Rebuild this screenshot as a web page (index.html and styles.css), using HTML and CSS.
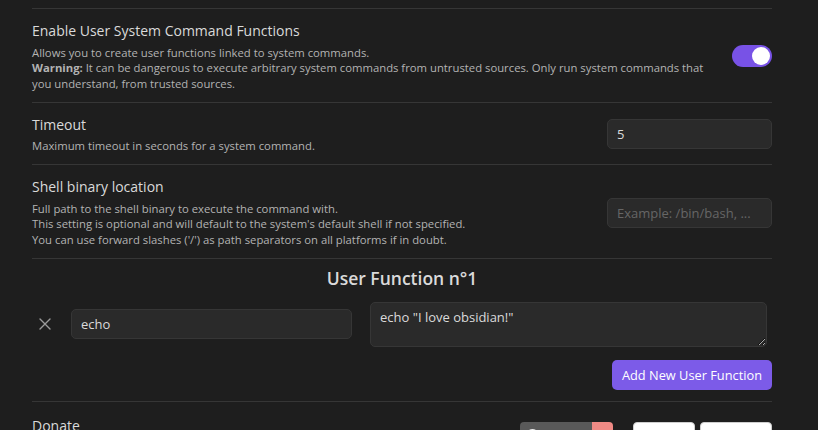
FILE: index.html
```html
<!DOCTYPE html>
<html lang="en">
<head>
<meta charset="utf-8">
<title>Settings</title>
<link rel="stylesheet" href="styles.css">
</head>
<body>
<div class="settings">
  <div class="setting-item">
    <div class="info">
      <div class="name">Enable User System Command Functions</div>
      <div class="desc">Allows you to create user functions linked to system commands.<br><strong>Warning:</strong> It can be dangerous to execute arbitrary system commands from untrusted sources. Only run system commands that you understand, from trusted sources.</div>
    </div>
    <div class="control">
      <div class="toggle is-on"><span class="knob"></span></div>
    </div>
  </div>

  <div class="setting-item">
    <div class="info">
      <div class="name">Timeout</div>
      <div class="desc">Maximum timeout in seconds for a system command.</div>
    </div>
    <div class="control">
      <input class="text-input" type="text" value="5">
    </div>
  </div>

  <div class="setting-item">
    <div class="info">
      <div class="name">Shell binary location</div>
      <div class="desc">Full path to the shell binary to execute the command with.<br>This setting is optional and will default to the system's default shell if not specified.<br>You can use forward slashes ('/') as path separators on all platforms if in doubt.</div>
    </div>
    <div class="control">
      <input class="text-input" type="text" placeholder="Example: /bin/bash, ...">
    </div>
  </div>

  <div class="user-functions">
    <h3 class="uf-title">User Function n°1</h3>
    <div class="uf-row">
      <button class="remove-btn" aria-label="Remove">
        <svg viewBox="0 0 12 12" width="12" height="12"><path d="M1 1 L11 11 M11 1 L1 11" stroke="#9a9a9a" stroke-width="1.4" stroke-linecap="round" fill="none"/></svg>
      </button>
      <input class="text-input name-input" type="text" value="echo">
      <textarea class="cmd-input">echo "I love obsidian!"</textarea>
    </div>
    <div class="uf-actions">
      <button class="mod-cta">Add New User Function</button>
    </div>
  </div>

  <div class="setting-item donate">
    <div class="info">
      <div class="name">Donate</div>
    </div>
    <div class="control badges">
      <span class="badge sponsor"><span class="b-left"><span class="gh-dot"></span>Sponsor</span><span class="b-right">♥</span></span>
      <span class="badge paypal"><span class="pp-icon"></span>Donate</span>
      <span class="badge coffee">Buy me a coffee</span>
    </div>
  </div>
</div>
</body>
</html>
```

FILE: styles.css
```css
* { box-sizing: border-box; }

html, body {
  margin: 0;
  padding: 0;
  background: #1e1e1e;
  overflow: hidden;
}

body {
  font-family: "Open Sans", "Noto Sans", sans-serif;
  color: #dadada;
  height: 430px;
}

.settings {
  width: 740px;
  margin-left: 32px;
  padding-top: 8px;
}

.setting-item {
  display: flex;
  align-items: center;
  border-top: 1px solid #363636;
  padding: 12px 0 10.5px;
}

.info {
  flex: 1 1 auto;
  margin-right: 16px;
}

.name {
  font-size: 14px;
  line-height: 19.5px;
  color: #dadada;
}

.desc {
  font-size: 11.3px;
  line-height: 15.6px;
  color: #b3b3b3;
  padding-top: 4px;
}

.desc strong {
  font-weight: 700;
  color: #b3b3b3;
}

.control {
  flex: 0 0 auto;
  display: flex;
  align-items: center;
}

.toggle {
  width: 40px;
  height: 22px;
  border-radius: 11px;
  background: #7852e6;
  position: relative;
}

.toggle .knob {
  position: absolute;
  top: 2px;
  right: 2px;
  width: 18px;
  height: 18px;
  border-radius: 50%;
  background: #ffffff;
}

.text-input {
  width: 165px;
  height: 30px;
  background: #2a2a2a;
  border: 1px solid #363636;
  border-radius: 5px;
  padding: 0 9px;
  font-family: "Open Sans", "Noto Sans", sans-serif;
  font-size: 13px;
  color: #dadada;
  outline: none;
}

.text-input::placeholder {
  color: #666666;
}

.user-functions {
  border-top: 1px solid #363636;
  padding: 6.5px 0 11px;
}

.uf-title {
  margin: 0;
  text-align: center;
  font-size: 17.5px;
  line-height: 24px;
  font-weight: 600;
  color: #dadada;
}

.uf-row {
  display: flex;
  align-items: center;
  margin-top: 12px;
}

.remove-btn {
  width: 26px;
  height: 26px;
  padding: 0;
  border: none;
  background: transparent;
  display: flex;
  align-items: center;
  justify-content: center;
  margin-right: 13px;
}

.name-input {
  width: 281px;
  margin-right: 18px;
  font-size: 13px;
}

.cmd-input {
  width: 397px;
  height: 45px;
  background: #2a2a2a;
  border: 1px solid #363636;
  border-radius: 5px;
  padding: 5px 9px;
  font-family: "Open Sans", "Noto Sans", sans-serif;
  font-size: 13px;
  line-height: 18px;
  color: #dadada;
  resize: vertical;
  outline: none;
}

.uf-actions {
  display: flex;
  justify-content: flex-end;
  margin-top: 13px;
}

.mod-cta {
  height: 30px;
  width: 160px;
  padding: 0;
  border: none;
  border-radius: 5px;
  background: #7c5be8;
  color: #ffffff;
  font-family: "Open Sans", "Noto Sans", sans-serif;
  font-size: 12.8px;
  white-space: nowrap;
  text-align: center;
}

.donate {
  align-items: flex-start;
  padding-top: 14px;
}

.badges {
  margin-top: 6px;
  gap: 0;
}

.badge {
  display: inline-flex;
  align-items: center;
  height: 28px;
  font-family: "Liberation Sans", sans-serif;
  font-size: 12px;
  border-radius: 4px;
}

.sponsor {
  width: 93px;
  overflow: hidden;
  margin-right: 20px;
}

.sponsor .b-left {
  background: #595959;
  color: #ffffff;
  height: 100%;
  flex: 0 0 72px;
  display: flex;
  align-items: center;
  padding-left: 6px;
  gap: 4px;
}

.gh-dot {
  width: 13px;
  height: 13px;
  border-radius: 50%;
  border: 2px solid #e6e6e6;
}

.sponsor .b-right {
  background: #f08a85;
  color: #ffffff;
  height: 100%;
  flex: 1;
  display: flex;
  align-items: center;
  justify-content: center;
}

.paypal {
  width: 62px;
  background: #ffffff;
  border: 1px solid #cfcfcf;
  color: #222;
  padding-left: 8px;
  gap: 4px;
  margin-right: 5px;
}

.pp-icon {
  width: 9px;
  height: 12px;
  background: #1b3a8c;
  border-radius: 3px 3px 0 0;
}

.coffee {
  width: 72px;
  background: #ffffff;
  border: 1px solid #cfcfcf;
  color: #222;
  padding-left: 6px;
  white-space: nowrap;
  overflow: hidden;
}
```
